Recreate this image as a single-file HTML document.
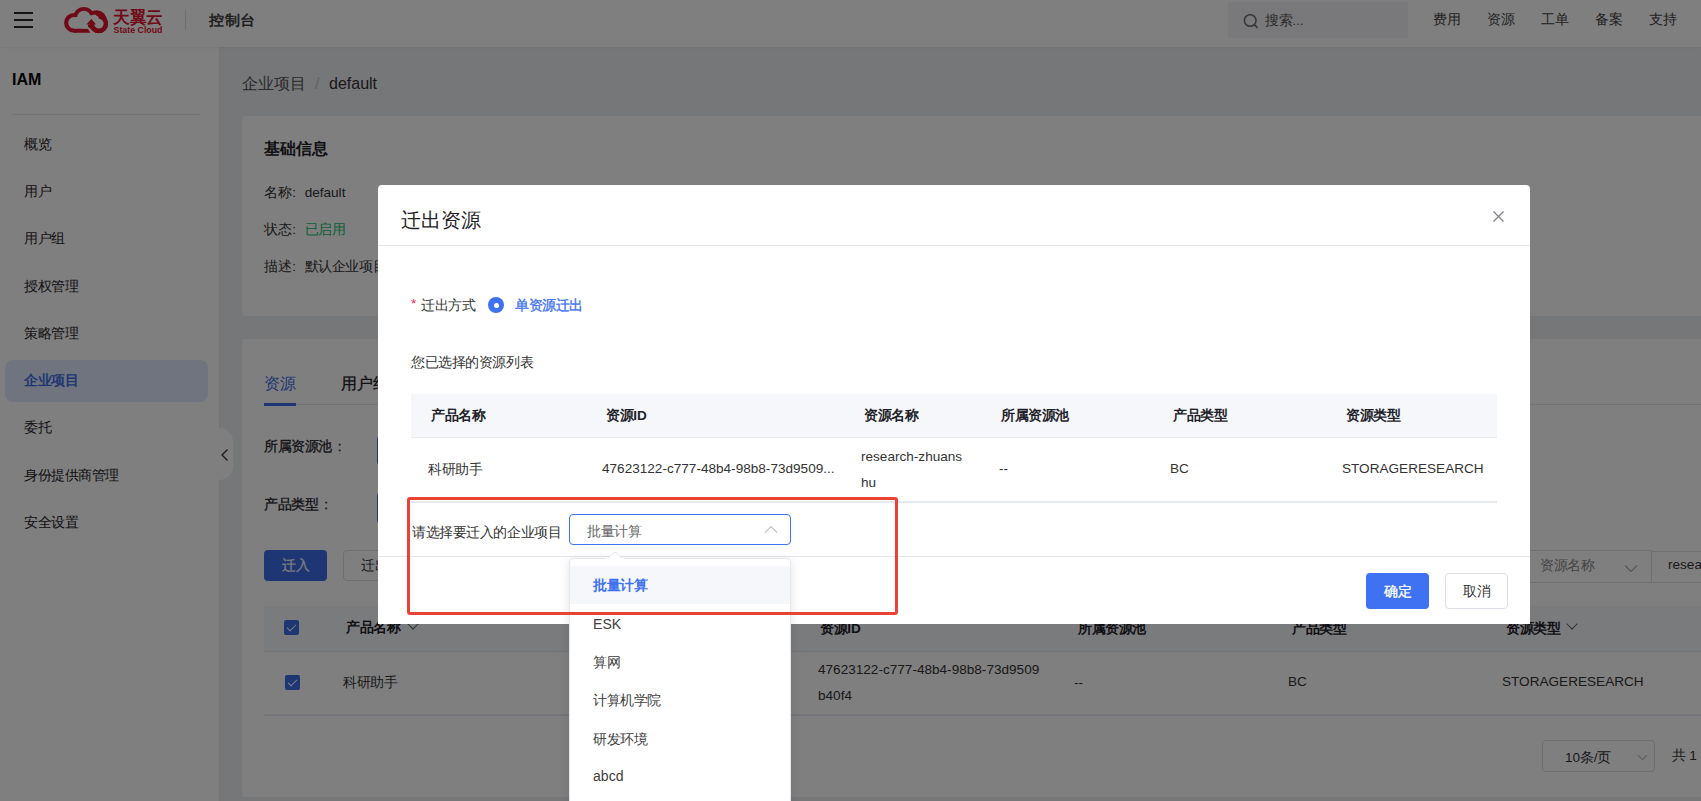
<!DOCTYPE html>
<html><head><meta charset="utf-8">
<style>
*{box-sizing:border-box;margin:0;padding:0}
html,body{width:1701px;height:801px;overflow:hidden}
body{position:relative;font-family:"Liberation Sans",sans-serif;font-size:14px;color:#333;background:#eceef3}
.a{position:absolute}
.t{position:absolute;white-space:nowrap;line-height:20px;font-size:14px;transform:scale(.97);transform-origin:0 0}
.b{position:absolute;white-space:nowrap;line-height:22px;font-size:16px}
#hdr{position:absolute;left:0;top:0;width:1701px;height:47px;background:#fff;box-shadow:0 1px 2px rgba(0,0,0,.05);z-index:2}
#side{position:absolute;left:0;top:47px;width:220px;height:754px;background:#fff;border-right:1px solid #e8e9ee}
.mi{color:#1f2329}
.card{position:absolute;background:#fff;border-radius:4px}
#mask{position:absolute;left:0;top:0;width:1701px;height:801px;background:rgba(0,0,0,.5);z-index:10}
#modal{position:absolute;left:378px;top:185px;width:1152px;height:439px;background:#fff;border-radius:4px 4px 0 0;z-index:11}
#dd{position:absolute;left:569px;top:558px;width:222px;height:260px;background:#fff;border:1px solid #e4e7ed;border-radius:4px;box-shadow:0 2px 12px rgba(0,0,0,.1);z-index:12}
#redbox{position:absolute;left:407px;top:497px;width:491px;height:118px;border:3px solid #ea4335;border-radius:3px;z-index:13}
.th{font-weight:bold;color:#1f2329}
.cb{position:absolute;width:15px;height:15px;background:#3d6de8;border-radius:2px}
.cb:after{content:"";position:absolute;left:5px;top:2px;width:4px;height:8px;border:solid #fff;border-width:0 1.3px 1.3px 0;transform:rotate(45deg)}
.chev{position:absolute;width:8px;height:8px;border:solid #999;border-width:0 1px 1px 0;transform:rotate(45deg)}
.ln{position:absolute;height:1px;background:#e5e6eb}
</style></head><body>

<div id="hdr">
  <div class="a" style="left:14px;top:12px;width:19px;height:2px;background:#2a2a2a"></div>
  <div class="a" style="left:14px;top:19px;width:19px;height:2px;background:#2a2a2a"></div>
  <div class="a" style="left:14px;top:26px;width:19px;height:2px;background:#2a2a2a"></div>
  <svg class="a" style="left:60px;top:3px" width="110" height="36" viewBox="60 3 110 36">
    <g fill="#e3112f">
      <circle cx="74" cy="22.8" r="9.9"/>
      <circle cx="83.85" cy="17.55" r="10.65"/>
      <circle cx="96.5" cy="20.5" r="10.3"/>
      <circle cx="98.7" cy="23.8" r="9.3"/>
      <path d="M74 28.7 H88 L90.3 32.7 H74 Z"/>
    </g>
    <g fill="#fff">
      <circle cx="74" cy="22.8" r="5.8"/>
      <circle cx="83.85" cy="17.55" r="6.75"/>
      <path d="M86 16 L91.6 15.2 L95 14.6 L98.5 17 L99 21 L94 24.6 L88 24.6 Z"/>
      <circle cx="99" cy="23.6" r="5.1"/>
      <path d="M74 17 H88 V28.7 H74 Z"/>
    </g>
    <path d="M91.5 24.2 A7.2 7.2 0 1 0 99.5 16.6" fill="none" stroke="#e3112f" stroke-width="4.4"/>
    <path d="M86.4 24.6 L96.1 24.6 L91.35 19.1 Z" fill="#e3112f"/>
    <text x="113" y="23" font-size="16.5" font-weight="bold" fill="#e3112f" textLength="50" lengthAdjust="spacingAndGlyphs">天翼云</text>
    <text x="113.5" y="33.2" font-size="8.2" font-weight="bold" fill="#e3112f" textLength="49" lengthAdjust="spacingAndGlyphs">State Cloud</text>
  </svg>
  <div class="a" style="left:185px;top:9px;width:1px;height:21px;background:#ddd"></div>
  <div class="b" style="left:209px;top:9px;color:#333;-webkit-text-stroke:.5px #333;transform:scale(.97,.9);transform-origin:0 50%">控制台</div>
  <div class="a" style="left:1228px;top:2px;width:180px;height:36px;background:#f2f3f7;border-radius:3px"></div>
  <svg class="a" style="left:1243px;top:14px" width="16" height="15" viewBox="0 0 16 15"><circle cx="7.2" cy="6.5" r="5.8" fill="none" stroke="#707070" stroke-width="1.6"/><path d="M11.3 10.6 L14.6 13.8" stroke="#707070" stroke-width="1.7"/></svg>
  <div class="t" style="left:1265px;top:10px;color:#5a5a5a">搜索...</div>
  <div class="t" style="left:1433px;top:9px;color:#444">费用</div>
  <div class="t" style="left:1487px;top:9px;color:#444">资源</div>
  <div class="t" style="left:1541px;top:9px;color:#444">工单</div>
  <div class="t" style="left:1595px;top:9px;color:#444">备案</div>
  <div class="t" style="left:1649px;top:9px;color:#444">支持</div>
</div>

<div id="side">
  <div class="b" style="left:12px;top:23px;line-height:20px;font-weight:bold;color:#000">IAM</div>
  <div class="ln" style="left:12px;top:67px;width:188px"></div>
  <div class="t mi" style="left:24px;top:87px">概览</div>
  <div class="t mi" style="left:24px;top:134px">用户</div>
  <div class="t mi" style="left:24px;top:181px">用户组</div>
  <div class="t mi" style="left:24px;top:229px">授权管理</div>
  <div class="t mi" style="left:24px;top:276px">策略管理</div>
  <div class="a" style="left:5px;top:313px;width:203px;height:42px;background:#dfe9fd;border-radius:8px"></div>
  <div class="t mi" style="left:24px;top:323px;color:#3d6de8;font-weight:bold">企业项目</div>
  <div class="t mi" style="left:24px;top:370px">委托</div>
  <div class="t mi" style="left:24px;top:418px">身份提供商管理</div>
  <div class="t mi" style="left:24px;top:465px">安全设置</div>
</div>
<div class="a" style="left:219px;top:428px;width:14px;height:52px;background:#fff;border-radius:0 14px 14px 0"></div>
<svg class="a" style="left:220px;top:448px" width="10" height="14" viewBox="0 0 10 14"><path d="M7.5 1.5 L2 7 L7.5 12.5" fill="none" stroke="#333" stroke-width="1.3"/></svg>

<div class="b" style="left:242px;top:73px;color:#555">企业项目</div>
<div class="b" style="left:315px;top:73px;color:#c0c4cc">/</div>
<div class="b" style="left:329px;top:73px;color:#333">default</div>

<div class="card" style="left:242px;top:116px;width:1470px;height:200px"></div>
<div class="b" style="left:264px;top:138px;font-weight:bold;color:#1f2329">基础信息</div>
<div class="t" style="left:264px;top:182px">名称<span style="margin-left:1px">:</span><span style="margin-left:9px">default</span></div>
<div class="t" style="left:264px;top:219px">状态<span style="margin-left:1px">:</span><span style="margin-left:9px;color:#1cc078">已启用</span></div>
<div class="t" style="left:264px;top:256px">描述<span style="margin-left:1px">:</span><span style="margin-left:9px">默认企业项目</span></div>

<div class="card" style="left:242px;top:339px;width:1470px;height:458px"></div>
<div class="b" style="left:264px;top:373px;color:#3d6de8">资源</div>
<div class="b" style="left:341px;top:373px;color:#1f2329;-webkit-text-stroke:.3px #1f2329">用户组</div>
<div class="ln" style="left:264px;top:404px;width:1437px"></div>
<div class="a" style="left:264px;top:403px;width:32px;height:3px;background:#3d6de8"></div>
<div class="t" style="left:264px;top:436px;color:#1f2329;-webkit-text-stroke:.3px #1f2329">所属资源池<span style="margin-left:6px">:</span></div>
<div class="a" style="left:377px;top:435px;width:300px;height:31px;border:1px solid #3d6de8;border-radius:4px"></div>
<div class="t" style="left:264px;top:494px;color:#1f2329;-webkit-text-stroke:.3px #1f2329">产品类型<span style="margin-left:6px">:</span></div>
<div class="a" style="left:377px;top:492px;width:300px;height:32px;border:1px solid #3d6de8;border-radius:4px"></div>
<div class="a" style="left:264px;top:550px;width:63px;height:31px;background:#3d6de8;border-radius:4px"></div>
<div class="t" style="left:282px;top:555px;color:#fff;-webkit-text-stroke:.2px #fff">迁入</div>
<div class="a" style="left:343px;top:550px;width:63px;height:31px;border:1px solid #dcdfe6;border-radius:4px"></div>
<div class="t" style="left:361px;top:555px;color:#333">迁出</div>
<div class="a" style="left:1520px;top:550px;width:132px;height:33px;border:1px solid #dcdfe6;border-radius:4px 0 0 4px"></div>
<div class="t" style="left:1540px;top:555px;color:#888">资源名称</div>
<svg class="a" style="left:1624px;top:564px" width="14" height="9" viewBox="0 0 14 9"><path d="M1 1.5 L7 7.5 L13 1.5" fill="none" stroke="#aaa" stroke-width="1.1"/></svg>
<div class="a" style="left:1651px;top:551px;width:80px;height:32px;border:1px solid #dcdfe6"></div>
<div class="t" style="left:1668px;top:554px;color:#333">research</div>

<div class="a" style="left:264px;top:606px;width:1437px;height:46px;background:#f5f7fa;border-bottom:1px solid #e5e6eb"></div>
<div class="cb" style="left:284px;top:620px"></div>
<div class="t th" style="left:346px;top:617px">产品名称</div>
<div class="chev" style="left:409px;top:620px;border-color:#666"></div>
<div class="t th" style="left:820px;top:618px">资源ID</div>
<div class="t th" style="left:1078px;top:618px">所属资源池</div>
<div class="t th" style="left:1292px;top:618px">产品类型</div>
<div class="t th" style="left:1506px;top:618px">资源类型</div>
<div class="chev" style="left:1568px;top:620px;border-color:#666"></div>
<div class="cb" style="left:285px;top:675px"></div>
<div class="t" style="left:343px;top:672px">科研助手</div>
<div class="t" style="left:818px;top:656.5px;line-height:26px">47623122-c777-48b4-98b8-73d9509<br>b40f4</div>
<div class="t" style="left:1074px;top:672px">--</div>
<div class="t" style="left:1288px;top:671px">BC</div>
<div class="t" style="left:1502px;top:671px">STORAGERESEARCH</div>
<div class="ln" style="left:264px;top:714px;width:1437px;height:2px;background:#e6e9f2"></div>
<div class="a" style="left:1542px;top:740px;width:113px;height:32px;border:1px solid #dcdfe6;border-radius:4px"></div>
<div class="t" style="left:1565px;top:747px;color:#333">10条/页</div>
<div class="chev" style="left:1639px;top:752px;border-color:#bbb;width:7px;height:7px"></div>
<div class="t" style="left:1672px;top:745px;color:#333">共 1</div>

<div id="mask"></div>

<div id="modal">
  <div class="a" style="left:23px;top:22px;font-size:20px;line-height:26px;color:#1f2329;white-space:nowrap">迁出资源</div>
  <svg class="a" style="left:1115px;top:26px" width="11" height="11" viewBox="0 0 11 11"><path d="M0.5 0.5 L10.5 10.5 M10.5 0.5 L0.5 10.5" stroke="#7d828c" stroke-width="1.3"/></svg>
  <div class="ln" style="left:0;top:60px;width:1152px"></div>

  <div class="t" style="left:33px;top:108px;color:#f5222d;font-size:14px">*</div>
  <div class="t" style="left:43px;top:110px;color:#333">迁出方式</div>
  <div class="a" style="left:110px;top:112px;width:16px;height:16px;border-radius:50%;background:#3e72f2"></div>
  <div class="a" style="left:115.5px;top:117.5px;width:5px;height:5px;border-radius:50%;background:#fff"></div>
  <div class="t" style="left:137px;top:110px;color:#3e72f2;-webkit-text-stroke:.35px #3e72f2">单资源迁出</div>
  <div class="t" style="left:33px;top:167px;color:#333">您已选择的资源列表</div>

  <div class="a" style="left:33px;top:209px;width:1086px;height:44px;background:#f5f7fa;border-bottom:1px solid #e9ecf3"></div>
  <div class="t th" style="left:53px;top:220px">产品名称</div>
  <div class="t th" style="left:228px;top:220px">资源ID</div>
  <div class="t th" style="left:486px;top:220px">资源名称</div>
  <div class="t th" style="left:623px;top:220px">所属资源池</div>
  <div class="t th" style="left:795px;top:220px">产品类型</div>
  <div class="t th" style="left:968px;top:220px">资源类型</div>
  <div class="t" style="left:50px;top:273.5px">科研助手</div>
  <div class="t" style="left:224px;top:273px">47623122-c777-48b4-98b8-73d9509...</div>
  <div class="t" style="left:483px;top:258.5px;line-height:26px">research-zhuans<br>hu</div>
  <div class="t" style="left:621px;top:273px">--</div>
  <div class="t" style="left:792px;top:273px">BC</div>
  <div class="t" style="left:964px;top:273px">STORAGERESEARCH</div>
  <div class="ln" style="left:33px;top:316px;width:1086px;height:2px;background:#e6e9f2"></div>

  <div class="t" style="left:34px;top:337px;color:#333">请选择要迁入的企业项目</div>
  <div class="a" style="left:191px;top:329px;width:222px;height:31px;border:1px solid #3e72f2;border-radius:4px"></div>
  <div class="t" style="left:209px;top:336px;color:#666">批量计算</div>
  <svg class="a" style="left:386px;top:340px" width="14" height="9" viewBox="0 0 14 9"><path d="M1 7.5 L7 1.5 L13 7.5" fill="none" stroke="#c0c4cc" stroke-width="1.2"/></svg>

  <div class="ln" style="left:0;top:371px;width:1152px"></div>
  <div class="a" style="left:988px;top:388px;width:63px;height:36px;background:#3e72f2;border-radius:4px"></div>
  <div class="t" style="left:1006px;top:396px;color:#fff;-webkit-text-stroke:.3px #fff">确定</div>
  <div class="a" style="left:1067px;top:388px;width:63px;height:36px;border:1px solid #dcdfe6;border-radius:4px"></div>
  <div class="t" style="left:1085px;top:396px;color:#333">取消</div>
</div>

<div id="dd">
  <div class="a" style="left:0;top:7px;width:220px;height:38px;background:#f5f7fa"></div>
  <div class="t" style="left:23px;top:16px;color:#3e72f2;font-weight:bold">批量计算</div>
  <div class="t" style="left:23px;top:54.5px;color:#404040;font-size:14.5px">ESK</div>
  <div class="t" style="left:23px;top:93px;color:#404040">算网</div>
  <div class="t" style="left:23px;top:131px;color:#404040">计算机学院</div>
  <div class="t" style="left:23px;top:170px;color:#404040">研发环境</div>
  <div class="t" style="left:23px;top:207px;color:#404040;font-size:14.5px">abcd</div>
</div>
<svg class="a" style="left:606px;top:551px;z-index:12" width="18" height="8" viewBox="0 0 18 8"><path d="M1 8 L9 1 L17 8 Z" fill="#fff" stroke="#e4e7ed" stroke-width="1"/><rect x="0" y="7.2" width="18" height="1" fill="#fff"/></svg>
<div id="redbox"></div>

</body></html>
